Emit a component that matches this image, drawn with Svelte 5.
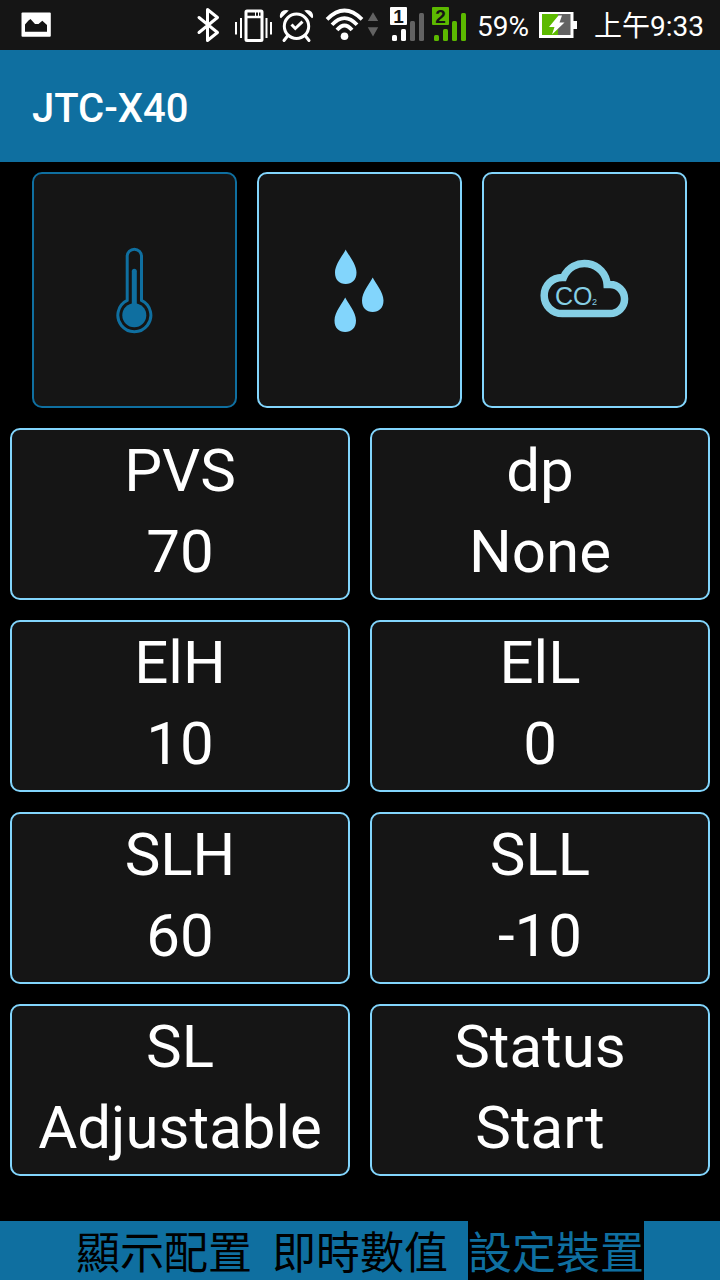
<script>
  let sensor = $state('temperature');
  let tab = $state('設定裝置');
  const tabs = ['顯示配置', '即時數值', '設定裝置'];
  const settings = [
    ['PVS', '70'],
    ['dp', 'None'],
    ['ElH', '10'],
    ['ElL', '0'],
    ['SLH', '60'],
    ['SLL', '-10'],
    ['SL', 'Adjustable'],
    ['Status', 'Start']
  ];
  const drop =
    'M345.7 249.5C348 254.500 356.500 264 356.500 272.500C356.500 280 352 284 345.700 284C339.400 284 335 280 335 272.500C335 264 343.400 254.500 345.700 249.500Z';
</script>

<div class="screen">
  <div class="status">
    <svg class="photo" width="30" height="36" viewBox="21 7 30 36">
      <rect x="21.500" y="12.500" width="29.300" height="24.300" rx="1" fill="#fff" />
      <path d="M25 31.800V24.500L28.500 20.500L30.500 19L35 24H38.500L42.300 20.700L47 25V31.800Z" fill="#151515" />
    </svg>

    <svg width="32" height="36" viewBox="194 7 32 36" fill="none" stroke="#fff" stroke-width="3" stroke-linecap="round" stroke-linejoin="round">
      <path d="M199 17.500L217.500 32.500L207.500 40.500V9.500L217.500 17.500L199 32.500" />
    </svg>

    <svg width="41" height="36" viewBox="232 7 41 36" fill="none" stroke="#fff">
      <rect x="246" y="11" width="16" height="29.500" rx="1" stroke-width="3" />
      <path d="M246 17H262" stroke-width="2.500" />
      <path d="M255.500 12V16M258.500 12V16" stroke-width="1" />
      <path d="M236 22V34.500M241 18V38M266.500 18V38M271 22V34.500" stroke-width="2" />
    </svg>

    <svg width="35" height="36" viewBox="279 7 35 36" fill="none" stroke="#fff" stroke-width="3">
      <circle cx="296.500" cy="26.300" r="12.200" />
      <path d="M291.500 24.500L295.300 28.500L302.500 21.700" />
      <path d="M287.500 36L284 40.500M305.500 36L309 40.500" stroke-linecap="round" />
      <path d="M280 17.500C279 12 284 8.500 288.800 10.500L281 18.200Z M313 17.500C314 12 309 8.500 304.200 10.500L312 18.200Z" fill="#fff" stroke="none" />
    </svg>

    <svg width="61" height="36" viewBox="320 7 61 36" fill="none" stroke="#fff" stroke-width="3.800">
      <path d="M327 19.300Q344.500 1.800 362 19.300M332 24.700Q344.500 11.500 357 24.700M337 30Q344.500 21 352 30" />
      <circle cx="344.500" cy="36.300" r="3.800" fill="#fff" stroke="none" />
      <path d="M373 12.300L378.200 21H367.800Z M367.800 27.300H378.200L373 36.500Z" fill="#626262" stroke="none" />
    </svg>

    <svg width="39" height="44" viewBox="387 3 39 44" fill="#fff">
      <rect x="390" y="7" width="17" height="18" rx="1" />
      <text x="398.500" y="22.500" class="sim">1</text>
      <rect x="392" y="35" width="5" height="6" rx="1.500" />
      <rect x="401" y="29" width="5" height="12" rx="1.500" />
      <rect x="410" y="21" width="5" height="20" rx="1.500" fill="#626262" />
      <rect x="419" y="13" width="5" height="28" rx="1.500" fill="#626262" />
    </svg>

    <svg width="36" height="44" viewBox="432 3 36 44" fill="#5cb900">
      <rect x="432" y="7" width="17" height="18" rx="1" />
      <text x="440.500" y="22.500" class="sim">2</text>
      <rect x="434" y="35" width="5" height="6" rx="1.500" />
      <rect x="443" y="29" width="5" height="12" rx="1.500" />
      <rect x="452" y="21" width="5" height="20" rx="1.500" />
      <rect x="461" y="13" width="5" height="28" rx="1.500" />
    </svg>

    <span class="percent">59%</span>

    <svg width="42" height="36" viewBox="537 7 42 36">
      <path d="M539 12H573.500V21H577V29H573.500V38H539Z" fill="#fff" />
      <rect x="542" y="14" width="16" height="21" fill="#5cb900" />
      <rect x="558" y="14" width="12.500" height="21" fill="#626262" />
      <path d="M558.500 15.500H562L559.500 22.500H564.500L552 34.500L554.500 27H549Z" fill="#fff" />
    </svg>

    <span class="time">上午9:33</span>
  </div>

  <header><h1>JTC-X40</h1></header>

  <main>
    <div class="sensors">
      <button class:selected={sensor === 'temperature'} aria-label="Temperature" onclick={() => (sensor = 'temperature')}>
        <svg width="90" height="90" viewBox="90 245 90 90" fill="none" stroke="#0f6fa0" stroke-width="3">
          <path d="M127.200 300.400V256.300A7.150 7.150 0 0 1 141.500 256.300V300.400A16.500 16.500 0 1 1 127.200 300.400Z" />
          <path d="M134.300 271.300V310" stroke-width="5" stroke-linecap="round" />
          <circle cx="134.300" cy="315.300" r="12" fill="#0f6fa0" stroke="none" />
        </svg>
      </button>
      <button class:selected={sensor === 'humidity'} aria-label="Humidity" onclick={() => (sensor = 'humidity')}>
        <svg width="90" height="90" viewBox="315 245 90 90" fill="#82d5fc">
          <path d={drop} />
          <path d={drop} transform="translate(27 28)" />
          <path d={drop} transform="translate(-0.500 48)" />
        </svg>
      </button>
      <button class:selected={sensor === 'co2'} aria-label="CO2" onclick={() => (sensor = 'co2')}>
        <svg width="90" height="90" viewBox="540 245 90 90" fill="#85cfe5">
          <path
            d="M562.300 313.600A18.100 18.100 0 0 1 562.300 277.400L563.500 277.400A22.700 22.700 0 0 1 607.100 284.500H610A14.550 14.550 0 0 1 610 313.600Z"
            fill="none" stroke="#85cfe5" stroke-width="7.500"
          />
          <text x="555" y="305" class="co">CO</text>
          <text x="592" y="305" class="two">2</text>
        </svg>
      </button>
    </div>

    <div class="settings">
      {#each settings as [name, value]}
        <button>
          <span>{name}</span>
          <span>{value}</span>
        </button>
      {/each}
    </div>
  </main>

  <nav>
    {#each tabs as name}
      <button class:current={tab === name} onclick={() => (tab = name)}>{name}</button>
    {/each}
  </nav>
</div>

<style>
  :global(body) {
    background: #000;
  }
  .screen {
    min-height: 100vh;
    display: flex;
    flex-direction: column;
    background: #000;
    color: #fff;
    font-family: Roboto, 'Noto Sans CJK TC', sans-serif;
  }
  button {
    margin: 0;
    padding: 0;
    border: 0;
    font: inherit;
    color: inherit;
    cursor: pointer;
  }
  svg {
    display: block;
    flex: none;
  }
  .status {
    display: flex;
    align-items: center;
    justify-content: flex-end;
    gap: 6px;
    height: 50px;
    padding: 0 16px 0 21px;
    background: #151515;
    font-size: 28px;
    line-height: 46px;
    white-space: nowrap;
  }
  .status span {
    padding-top: 4px;
  }
  .photo {
    margin-right: auto;
  }
  .percent {
    margin: 0 2px 0 3px;
  }
  .time {
    margin-left: 9px;
  }
  .sim {
    font: 700 19px 'Liberation Sans', sans-serif;
    text-anchor: middle;
    fill: #151515;
  }
  header {
    display: flex;
    align-items: center;
    height: 106px;
    padding: 6px 32px 0;
    background: #0f6fa0;
  }
  h1 {
    margin: 0;
    font-size: 40px;
    line-height: 48px;
    font-weight: 500;
  }
  .sensors {
    display: grid;
    grid-template-columns: repeat(3, 1fr);
    gap: 20px;
    padding: 10px 33px 10px 32px;
  }
  .sensors button,
  .settings button {
    background: #151515;
    border: 2px solid #82d5fc;
    border-radius: 10px;
  }
  .sensors button {
    display: flex;
    align-items: center;
    justify-content: center;
    height: 236px;
  }
  .sensors .selected {
    border-color: #0f6fa0;
  }
  .co {
    font: 400 25px 'Liberation Sans', sans-serif;
  }
  .two {
    font: 400 9px 'Liberation Sans', sans-serif;
  }
  .settings {
    display: grid;
    grid-template-columns: repeat(2, 1fr);
    gap: 20px;
    padding: 10px;
  }
  .settings button {
    padding: 0 0 6px;
    font-size: 60px;
    line-height: 81px;
  }
  .settings span {
    display: block;
  }
  nav {
    display: flex;
    justify-content: center;
    gap: 20px;
    margin-top: auto;
    background: #0f6fa0;
  }
  nav button {
    padding-top: 8px;
    background: none;
    color: #000;
    font-size: 44px;
    line-height: 51px;
  }
  nav .current {
    background: #000;
    color: #0f6fa0;
  }
</style>
